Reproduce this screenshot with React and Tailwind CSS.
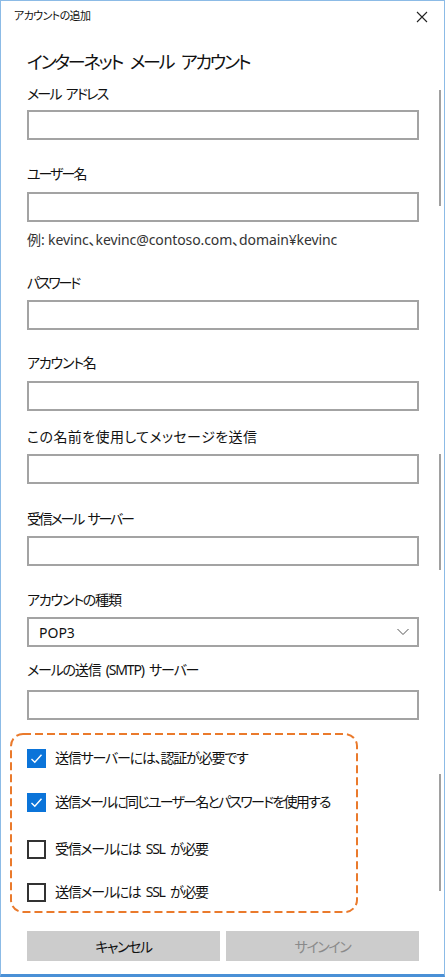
import React from 'react';

const font = "font-['Noto_Sans','Noto_Sans_CJK_JP',sans-serif] [font-feature-settings:'palt']";

// tracking is passed in whole so each label can be tuned to the reference width
const Label = ({ children, tr = 'tracking-[-1.2px]', className = '' }) => (
    <div className={`text-[14px] leading-[20px] ${tr} [word-spacing:3px] text-[#111] whitespace-nowrap ${className}`}>{children}</div>
);

const Input = ({ className = '' }) => (
    <div className={`h-[30px] border-2 border-[#a3a3a3] bg-white ${className}`} />
);

const Checkbox = ({ checked, label, tr = 'tracking-[-1.2px]', className = '' }) => (
    <div className={`flex items-center h-[20px] ${className}`}>
        {checked ? (
            <div className="w-[19px] h-[19px] shrink-0 bg-[#0b74d9] flex items-center justify-center">
                <svg width="13" height="13" viewBox="0 0 13 13">
                    <polyline points="1.5,7 4.8,10.2 11.5,2.8" fill="none" stroke="#fff" strokeWidth="1.4" />
                </svg>
            </div>
        ) : (
            <div className="w-[19px] h-[19px] shrink-0 border-2 border-[#333] bg-white" />
        )}
        <span className={`ml-[9px] text-[14px] leading-[20px] ${tr} [word-spacing:3px] text-[#111] whitespace-nowrap`}>{label}</span>
    </div>
);

const App = () => {
    return (
        <div className={`relative w-[445px] h-[977px] bg-white border border-[#8cbbe6] border-b-[3px] border-b-[#4a90d6] overflow-hidden ${font}`}>
            {/* scrollbar thumbs */}
            <div className="absolute left-[438px] top-[89px] w-[2px] h-[116px] bg-[#a0a0a0]" />
            <div className="absolute left-[438px] top-[453px] w-[2px] h-[116px] bg-[#a0a0a0]" />
            <div className="absolute left-[438px] top-[773px] w-[2px] h-[117px] bg-[#a0a0a0]" />

            {/* title bar */}
            <div className="flex items-center justify-between h-[31px] pl-[13px] pr-[16px]">
                <span className="text-[11px] tracking-[-0.6px] text-[#111]">アカウントの追加</span>
                <svg width="12" height="12" viewBox="0 0 12 12">
                    <path d="M1 1L11 11M11 1L1 11" stroke="#222" strokeWidth="1.1" />
                </svg>
            </div>

            <div className="pl-[26px] pr-[25px] flex flex-col">
                <h1 className="mt-[16px] text-[18px] leading-[28px] tracking-[-2.2px] [word-spacing:5px] text-[#111] font-normal whitespace-nowrap">インターネット メール アカウント</h1>

                <Label className="mt-[8px]" tr="tracking-[-1.8px]">メール アドレス</Label>
                <Input className="mt-[6px]" />

                <Label className="mt-[24px]" tr="tracking-[-2px]">ユーザー名</Label>
                <Input className="mt-[8px]" />
                <div className="mt-[8px] text-[14px] leading-[20px] tracking-[-0.1px] text-[#333] whitespace-nowrap">例: kevinc、kevinc@contoso.com、domain¥kevinc</div>

                <Label className="mt-[23px]" tr="tracking-[-2.2px]">パスワード</Label>
                <Input className="mt-[7px]" />

                <Label className="mt-[23px]">アカウント名</Label>
                <Input className="mt-[8px]" />

                <Label className="mt-[16px]" tr="tracking-[0.4px]">この名前を使用してメッセージを送信</Label>
                <Input className="mt-[7px]" />

                <Label className="mt-[25px]" tr="tracking-[-2.2px]">受信メール サーバー</Label>
                <Input className="mt-[7px]" />

                <Label className="mt-[24px]">アカウントの種類</Label>
                <div className="mt-[7px] h-[30px] border-2 border-[#a3a3a3] bg-white flex items-center justify-between pl-[10px] pr-[8px]">
                    <span className="text-[14px] text-[#111]">POP3</span>
                    <svg width="12" height="8" viewBox="0 0 12 8">
                        <polyline points="0.5,1 6,6.5 11.5,1" fill="none" stroke="#555" strokeWidth="1" />
                    </svg>
                </div>

                <Label className="mt-[13px]">メールの送信 (SMTP) サーバー</Label>
                <Input className="mt-[10px]" />

                {/* highlighted options */}
                <div className="relative mt-[13px] -ml-[17px] w-[348px] h-[180px] pl-[17px] pt-[15px]">
                    <svg className="absolute inset-0" width="348" height="180" viewBox="0 0 348 180">
                        <rect x="1" y="1" width="346" height="178" rx="12" ry="12" fill="none" stroke="#ea7a2c" strokeWidth="2" strokeDasharray="8 4" />
                    </svg>
                    <Checkbox checked label="送信サーバーには、認証が必要です" />
                    <Checkbox checked label="送信メールに同じユーザー名とパスワードを使用する" tr="tracking-[-1.75px]" className="mt-[24px]" />
                    <Checkbox label="受信メールには SSL が必要" tr="tracking-[-1.3px]" className="mt-[27px]" />
                    <Checkbox label="送信メールには SSL が必要" tr="tracking-[-1.3px]" className="mt-[23px]" />
                </div>

                <div className="mt-[18px] grid grid-cols-2 gap-[6px]">
                    <button className="h-[30px] bg-[#cccccc] text-[14px] tracking-[-1.4px] text-[#111]">キャンセル</button>
                    <button className="h-[30px] bg-[#cccccc] text-[14px] tracking-[-1.4px] text-[#8a8a8a]">サインイン</button>
                </div>
            </div>
        </div>
    );
};

export default App;
